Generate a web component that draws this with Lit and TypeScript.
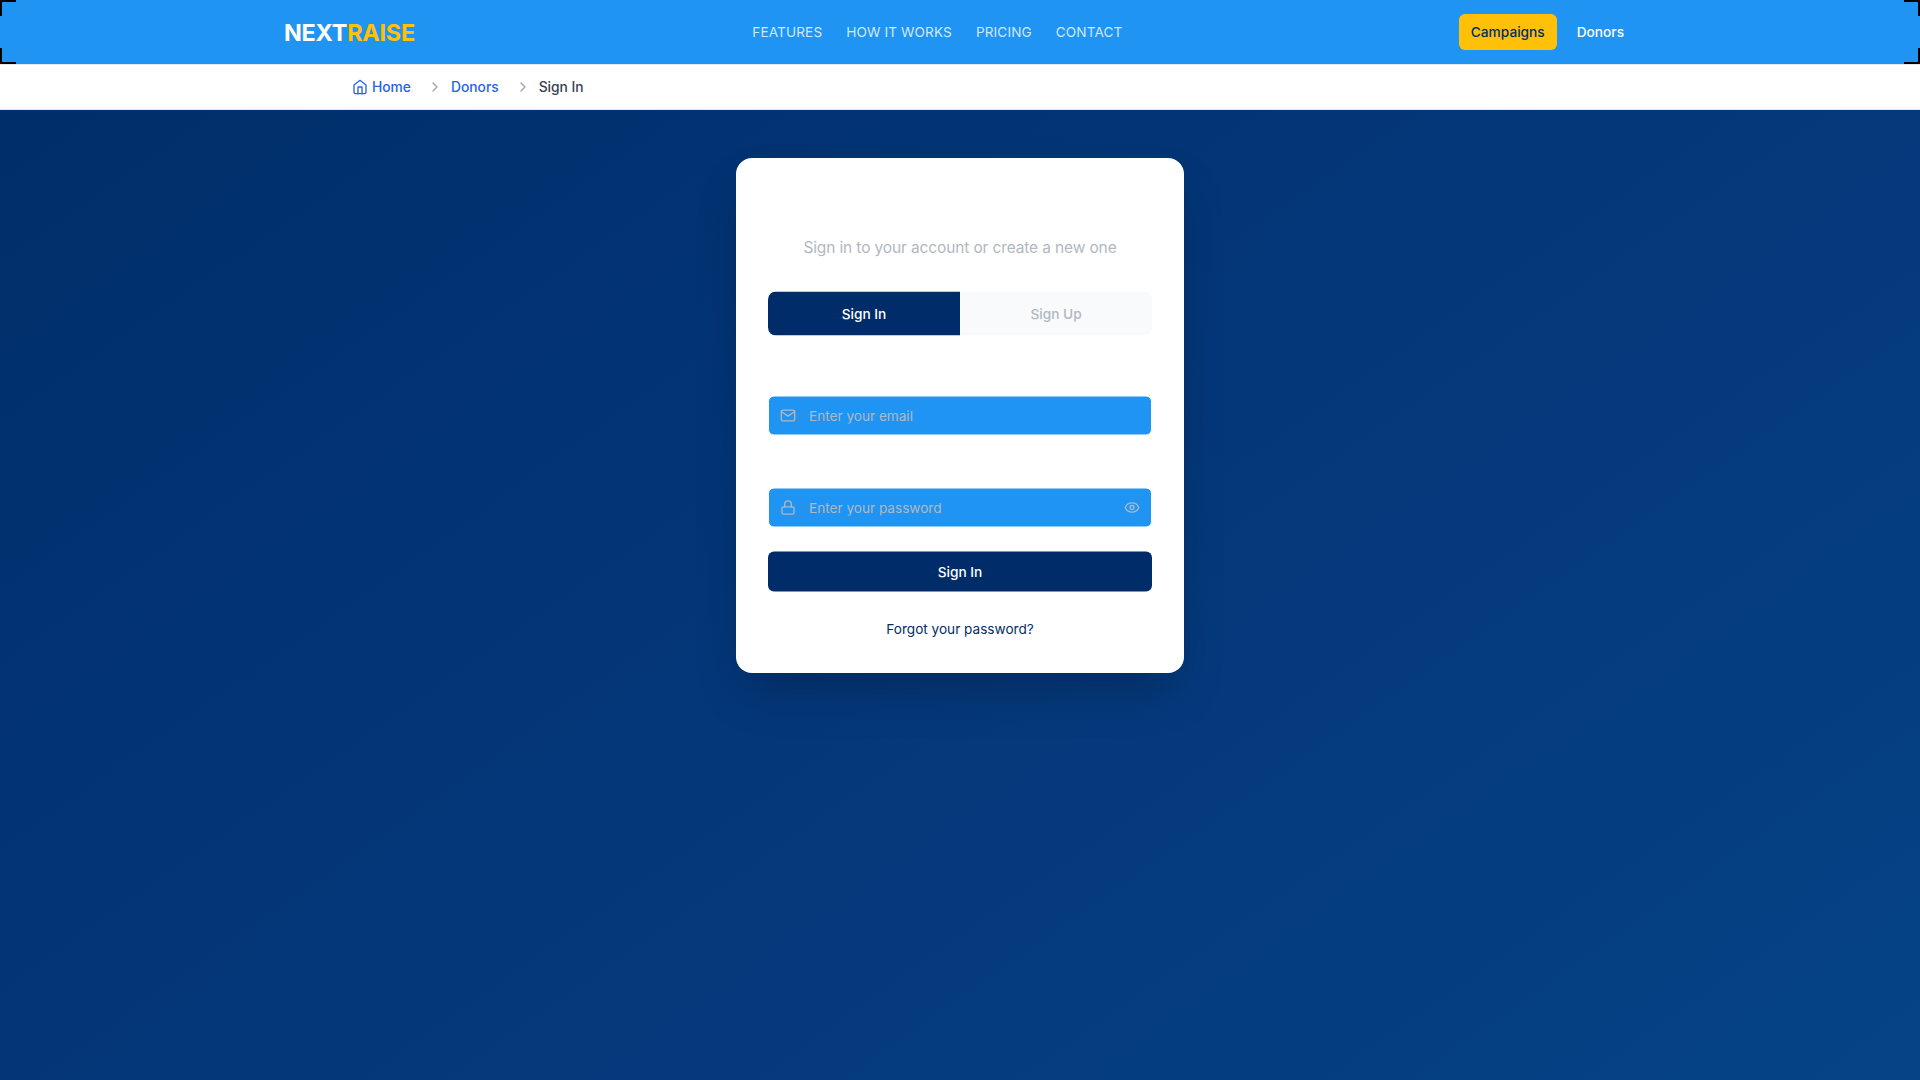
import { LitElement, html, css, svg } from "lit";
import { customElement, state } from "lit/decorators.js";

const icon = (cls: string, width: number, body: unknown) => html`
  <svg class=${cls} viewBox="0 0 24 24" fill="none" stroke="currentColor"
    stroke-width=${width} stroke-linecap="round" stroke-linejoin="round">${body}</svg>`;

const chevron = svg`<path d="m9 18 6-6-6-6"/>`;
const house = svg`<path d="m3 9 9-7 9 7v11a2 2 0 0 1-2 2H5a2 2 0 0 1-2-2z"/><path d="M9 22V12h6v10"/>`;
const mail = svg`<rect x="2" y="4" width="20" height="16" rx="2"/><path d="m22 6-10 7L2 6"/>`;
const lock = svg`<rect x="3" y="11" width="18" height="11" rx="2"/><path d="M7 11V7a5 5 0 0 1 10 0v4"/>`;
const eye = svg`<path d="M2.062 12.348a1 1 0 0 1 0-.696 10.75 10.75 0 0 1 19.876 0 1 1 0 0 1 0 .696 10.75 10.75 0 0 1-19.876 0"/><circle cx="12" cy="12" r="3"/>`;

@customElement("app-root")
export class AppRoot extends LitElement {
  @state() private shown = false;

  static styles = css`
    :host {
      display: flex;
      flex-direction: column;
      min-height: 100vh;
      font-family: Inter, "Liberation Sans", sans-serif;
      font-size: 13.6px;
      line-height: 20px;
    }
    * { box-sizing: border-box; }
    a { text-decoration: none; color: inherit; }
    svg { display: block; flex: none; }
    .header {
      position: relative;
      height: 64px;
      background: #2094f3;
      color: #fff;
    }
    .bar {
      max-width: 1400px;
      height: 64px;
      margin: 0 auto;
      padding: 0 24px;
      display: flex;
      justify-content: space-between;
      align-items: center;
    }
    .logo { padding-top: 1px; font-size: 23.4px; line-height: 32px; font-weight: 700; letter-spacing: -0.22px; }
    .gold { color: #ffc107; }
    .nav {
      display: flex;
      gap: 24px;
      padding-left: 1px;
      letter-spacing: 0.12px;
      color: rgba(255, 255, 255, 0.8);
    }
    .actions { display: flex; gap: 8px; justify-content: flex-end; font-size: 13.7px; font-weight: 450; }
    .action { height: 36px; padding: 8px 12px; border-radius: 6px; }
    .primary { background: #ffc107; color: #002d69; }
    .corner { position: absolute; width: 16px; height: 16px; border: 0 solid #000; }
    .tl { left: 0; top: 0; border-width: 2px 0 0 2px; }
    .tr { right: 0; top: 0; border-width: 2px 2px 0 0; }
    .bl { left: 0; bottom: 0; border-width: 0 0 2px 2px; }
    .br { right: 0; bottom: 0; border-width: 0 2px 2px 0; }
    .crumbs {
      background: #fff;
      border-top: 1px solid #e5e7eb;
      border-bottom: 1px solid #e5e7eb;
    }
    .trail {
      max-width: 1280px;
      margin: 0 auto;
      padding: 12px 32px;
      display: flex;
      align-items: center;
      gap: 16px;
      font-size: 13.8px;
      font-weight: 450;
      color: #2563eb;
    }
    .crumb { display: flex; align-items: center; gap: 4px; }
    .step { display: flex; align-items: center; gap: 8px; }
    .here { color: #374151; }
    .i16 { width: 16px; height: 16px; }
    .sep { width: 16px; height: 16px; color: #9ca3af; }
    .main {
      flex: 1;
      display: flex;
      justify-content: center;
      align-items: flex-start;
      padding: 48px 16px;
      background: linear-gradient(145deg, #002e6a 0%, #04377a 50%, #054386 100%);
    }
    .card {
      width: 448px;
      padding: 78px 32px 32px;
      border-radius: 16px;
      background: #fff;
      box-shadow: 0 25px 50px -12px rgba(0, 0, 0, 0.25);
    }
    .lead {
      margin: 0 0 31px;
      text-align: center;
      font-size: 15.5px;
      line-height: 24px;
      letter-spacing: -0.13px;
      color: #b0b8c1;
    }
    .panel { transform: translateY(0.5px); }
    .tabs { display: flex; border-radius: 8px; overflow: hidden; }
    .tab {
      flex: 1;
      height: 44px;
      border: 0;
      padding: 0;
      font: 450 13.7px/20px Inter, sans-serif;
      background: #f9fafc;
      color: #b0b8c1;
    }
    .tab.on { background: #002d69; color: #fff; }
    .form { display: flex; flex-direction: column; padding-top: 60px; }
    .field {
      display: flex;
      align-items: center;
      height: 40px;
      padding: 0 11px;
      border: 1px solid #fff;
      border-radius: 6px;
      background: #2094f3;
      color: #b0b8c1;
    }
    .gap { margin-top: 52px; }
    .input {
      flex: 1;
      min-width: 0;
      margin-left: 13px;
      padding: 0;
      border: 0;
      outline: 0;
      background: transparent;
      color: #fff;
      font: 400 13.6px/20px Inter, sans-serif;
    }
    .input::placeholder { color: #b0b8c1; opacity: 1; }
    .toggle { border: 0; padding: 0; background: none; color: inherit; }
    .submit {
      height: 40px;
      margin-top: 24px;
      border: 0;
      border-radius: 6px;
      background: #002d69;
      color: #fff;
      font: 450 13.7px/20px Inter, sans-serif;
    }
    .forgot { margin-top: 24px; line-height: 26px; text-align: center; color: #002d69; }
  `;

  render() {
    return html`
      <header class="header">
        <div class="bar">
          <a class="logo">NEXT<span class="gold">RAISE</span></a>
          <nav class="nav">
            ${["FEATURES", "HOW IT WORKS", "PRICING", "CONTACT"].map((t) => html`<a>${t}</a>`)}
          </nav>
          <div class="actions">
            <a class="action primary">Campaigns</a>
            <a class="action">Donors</a>
          </div>
        </div>
        ${["tl", "tr", "bl", "br"].map((c) => html`<i class="corner ${c}"></i>`)}
      </header>
      <div class="crumbs">
        <nav class="trail">
          <a class="crumb">${icon("i16", 2, house)}<span>Home</span></a>
          <div class="step">${icon("sep", 2, chevron)}<a>Donors</a></div>
          <div class="step">${icon("sep", 2, chevron)}<span class="here">Sign In</span></div>
        </nav>
      </div>
      <main class="main">
        <section class="card">
          <p class="lead">Sign in to your account or create a new one</p>
          <div class="panel">
            <div class="tabs">
              <button class="tab on">Sign In</button>
              <button class="tab">Sign Up</button>
            </div>
            <div class="form">
              <label class="field">
                ${icon("i16", 2, mail)}
                <input class="input" type="email" placeholder="Enter your email" />
              </label>
              <label class="field gap">
                ${icon("i16", 2, lock)}
                <input class="input" type=${this.shown ? "text" : "password"} placeholder="Enter your password" />
                <button class="toggle" @click=${() => (this.shown = !this.shown)}>${icon("i16", 2, eye)}</button>
              </label>
              <button class="submit">Sign In</button>
              <a class="forgot">Forgot your password?</a>
            </div>
          </div>
        </section>
      </main>`;
  }
}
